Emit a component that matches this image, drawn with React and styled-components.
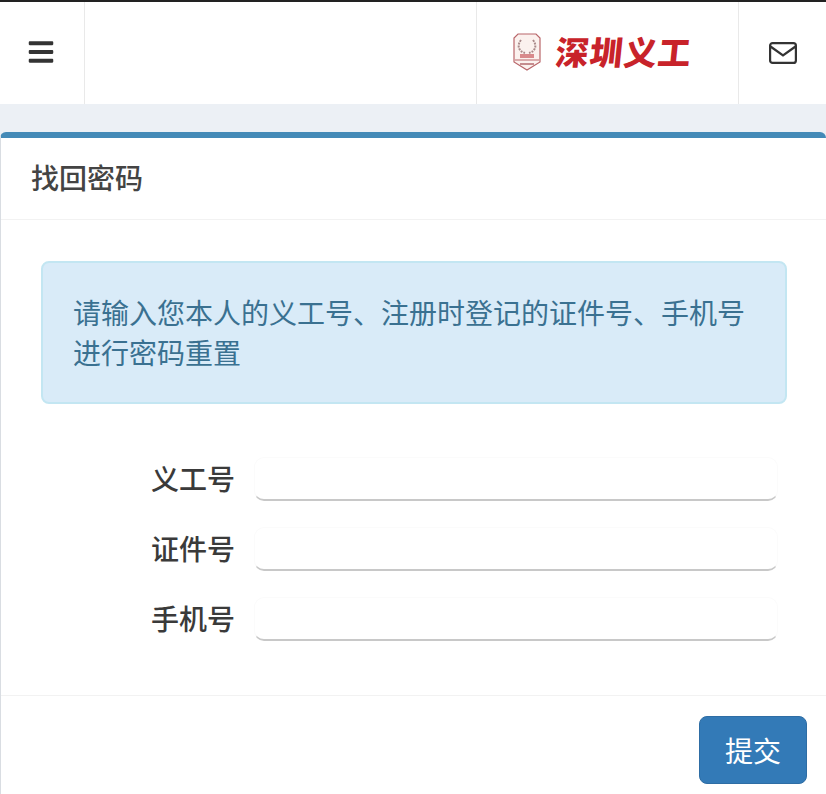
import styled, { createGlobalStyle } from "styled-components";
import { FaBars } from "react-icons/fa";

const GlobalStyle = createGlobalStyle`
  html, body {
    margin: 0;
    height: 794px;
    overflow: hidden;
    background: #ecf0f5;
    font-family: "Noto Sans CJK SC", "Liberation Sans", sans-serif;
  }
  * { box-sizing: border-box; }
`;

const fields = [
  { id: "volunteer", label: "义工号" },
  { id: "certificate", label: "证件号" },
  { id: "mobile", label: "手机号" },
];

const Emblem = () => (
  <svg width="30" height="38" viewBox="0 0 30 38" aria-hidden="true">
    <path
      d="M6 1h18l4 4v24l-13 8L2 29V5z"
      fill="#fbf1ee"
      stroke="#b9666a"
      strokeWidth="1.2"
    />
    <path d="M3 27h24" stroke="#b9666a" strokeWidth="1" />
    <path
      d="M9 7c-4 5-3 11 4 13M21 7c4 5 3 11-4 13"
      fill="none"
      stroke="#a98a8a"
      strokeWidth="2"
      strokeDasharray="2 1"
    />
    <path d="M8 21h14v4H8z" fill="#d98a8c" />
    <path d="M8 30h14v2H8z" fill="#c58c8e" />
  </svg>
);

const MailIcon = () => (
  <svg width="28" height="22" viewBox="0 0 28 22" aria-hidden="true">
    <rect x="1.1" y="1.1" width="25.8" height="19.8" rx="2.5" fill="none" stroke="#333" strokeWidth="2.2" />
    <path d="M1.5 4.5 14 13.5 26.5 4.5" fill="none" stroke="#333" strokeWidth="2.2" />
  </svg>
);

const App = () => {
  return (
    <>
      <GlobalStyle />
      <Page>
        <TopBar>
          <MenuCell>
            <FaBars />
          </MenuCell>
          <Spacer />
          <LogoCell>
            <Emblem />
            <LogoText>深圳义工</LogoText>
          </LogoCell>
          <MailCell>
            <MailIcon />
          </MailCell>
        </TopBar>
        <Content>
          <Box>
            <BoxHeader>找回密码</BoxHeader>
            <BoxBody>
              <Alert>
                请输入您本人的义工号、注册时登记的证件号、手机号进行密码重置
              </Alert>
              <Form>
                {fields.map((field) => (
                  <FormRow key={field.id}>
                    <Label htmlFor={field.id}>{field.label}</Label>
                    <Input id={field.id} type="text" />
                  </FormRow>
                ))}
              </Form>
            </BoxBody>
            <BoxFooter>
              <SubmitButton type="button">提交</SubmitButton>
            </BoxFooter>
          </Box>
        </Content>
      </Page>
    </>
  );
};

const Page = styled.div`
  display: flex;
  flex-direction: column;
  height: 794px;
  overflow: hidden;
`;

const TopBar = styled.header`
  display: flex;
  height: 104px;
  flex: none;
  background: #fff;
  border-top: 2px solid #222;
`;

const MenuCell = styled.div`
  display: flex;
  align-items: center;
  justify-content: center;
  width: 85px;
  padding: 0 2px 3px 0;
  border-right: 1px solid #e9e9e9;
  color: #333;
  font-size: 28px;
`;

const Spacer = styled.div`
  width: 392px;
  border-right: 1px solid #e9e9e9;
`;

const LogoCell = styled.div`
  display: flex;
  align-items: center;
  gap: 14px;
  width: 262px;
  padding: 0 0 3px 35px;
  border-right: 1px solid #e9e9e9;
`;

const LogoText = styled.span`
  color: #c8232a;
  font-family: "Noto Sans CJK SC", sans-serif;
  font-size: 33px;
  font-weight: 900;
  letter-spacing: 1px;
  line-height: 1;
  white-space: nowrap;
  transform: skewX(-6deg);
`;

const MailCell = styled.div`
  display: flex;
  flex: 1;
  align-items: center;
  justify-content: center;
`;

const Content = styled.main`
  flex: 1;
  padding-top: 28px;
`;

const Box = styled.section`
  height: 662px;
  background: #fff;
  border-top: 6px solid #448ab7;
  border-left: 1px solid #d9dde2;
  border-radius: 6px 6px 0 0;
`;

const BoxHeader = styled.h3`
  height: 82px;
  margin: 0;
  padding: 0 0 0 30px;
  border-bottom: 1px solid #f2f2f2;
  color: #444;
  font-size: 28px;
  font-weight: 500;
  line-height: 79px;
`;

const BoxBody = styled.div`
  height: 476px;
  padding: 41px 39px 0 40px;
  border-bottom: 1px solid #f2f2f2;
`;

const Alert = styled.div`
  height: 143px;
  padding: 29px 30px 0;
  background: #d9ebf8;
  border: 2px solid #c3e6f2;
  border-radius: 8px;
  color: #3a7191;
  font-size: 28px;
  line-height: 40px;
`;

const Form = styled.form`
  display: flex;
  flex-direction: column;
  gap: 27px;
  margin-top: 53px;
  padding-right: 9px;
`;

const FormRow = styled.div`
  display: flex;
  align-items: center;
  justify-content: flex-end;
  gap: 19px;
`;

const Label = styled.label`
  color: #3a3a3a;
  font-size: 28px;
  font-weight: 500;
  line-height: 43px;
`;

const Input = styled.input`
  width: 524px;
  height: 44px;
  padding: 0 12px;
  margin-bottom: -1px;
  background: #fff;
  border: 1px solid #fbfbfb;
  border-bottom: 2px solid #c8c8c8;
  border-radius: 10px;
  outline: none;
  font-size: 28px;
`;

const BoxFooter = styled.div`
  display: flex;
  justify-content: flex-end;
  padding: 20px 19px 0 0;
`;

const SubmitButton = styled.button`
  width: 108px;
  height: 68px;
  padding: 0;
  background: #337ab7;
  border: 1px solid #2e6da4;
  border-radius: 8px;
  color: #fff;
  font-family: inherit;
  font-size: 28px;
  line-height: 1;
`;

export default App;
